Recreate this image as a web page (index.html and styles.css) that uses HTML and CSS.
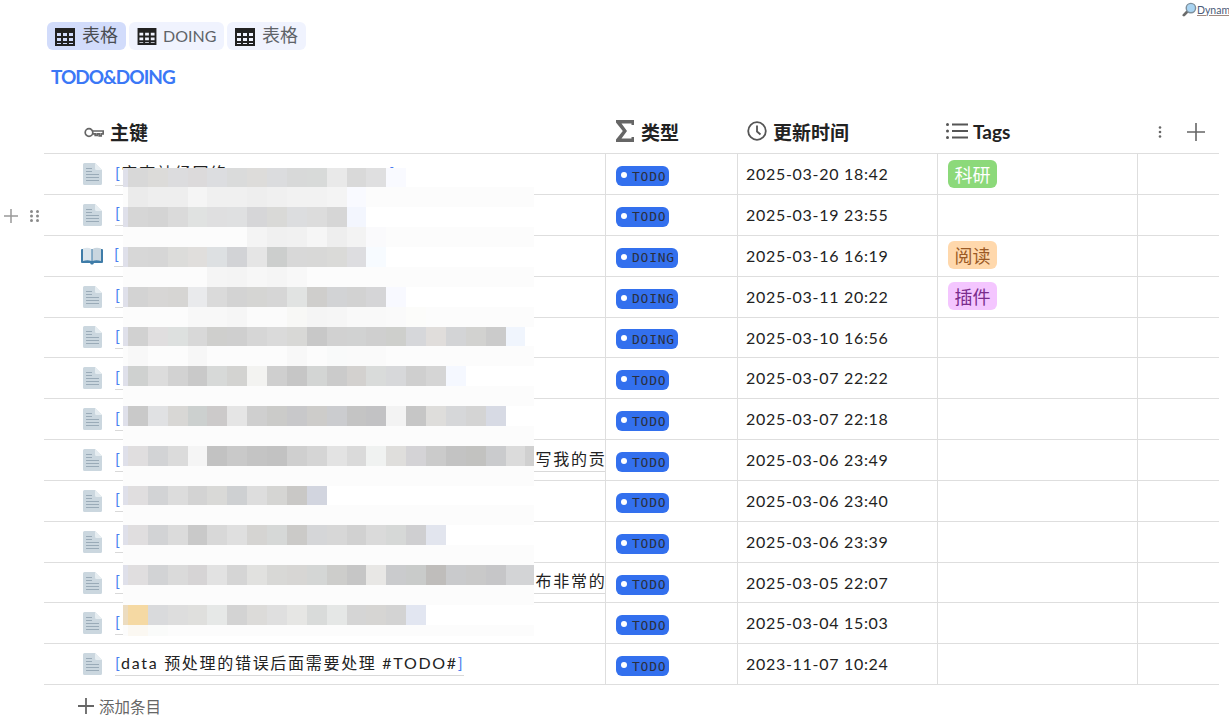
FILE: index.html
```html
<!DOCTYPE html>
<html lang="zh">
<head>
<meta charset="utf-8">
<title>TODO&amp;DOING</title>
<link rel="stylesheet" href="styles.css">
</head>
<body>
<svg width="0" height="0" class="defs">
  <defs>
    <symbol id="grid" viewBox="0 0 20 18"><path fill="#222" fill-rule="evenodd" d="M0 0h20v18H0zM2 5v3h4V5zm6 0v3h4V5zm6 0v3h4V5zM2 10v3h4v-3zm6 0v3h4v-3zm6 0v3h4v-3zM2 15v1h4v-1zm6 0v1h4v-1zm6 0v1h4v-1z"/></symbol>
    <symbol id="doc" viewBox="0 0 19 22"><path fill="#cbd7df" d="M1.5 0H12l7 7v13.500a1.500 1.500 0 0 1-1.500 1.500h-16A1.500 1.500 0 0 1 0 20.500V1.500A1.500 1.500 0 0 1 1.500 0z"/><path fill="#e6edf1" d="M12 0l7 7h-5.500A1.500 1.500 0 0 1 12 5.500z"/><path stroke="#9aabb8" stroke-width="1" fill="none" d="M3 5.500h6M3 8.500h6M3 11.500h13M3 14.500h13M3 17.500h13"/></symbol>
    <symbol id="book" viewBox="0 0 22 18"><path fill="#3f7ca8" d="M1 2h20a1 1 0 0 1 1 1v12a1 1 0 0 1-1 1h-8l-1 1.500h-2L9 16H1a1 1 0 0 1-1-1V3a1 1 0 0 1 1-1z"/><path fill="#dbe5ec" d="M2 1.500c3-1 6-1 8.500.5v12c-2.500-1-5.500-1-8.500 0z"/><path fill="#c9d6df" d="M20 1.500c-3-1-6-1-8.500.5v12c2.500-1 5.500-1 8.500 0z"/></symbol>
  </defs>
</svg>

<a class="dyn" href="#">
  <svg class="dyn-icon" viewBox="0 0 16 16"><path stroke="#6b6b6b" stroke-width="3" stroke-linecap="round" d="M2 14l3.500-3.500"/><circle cx="9.500" cy="6.500" r="5" fill="#a9d4f2" stroke="#7d8f9c" stroke-width="1.500"/></svg><span class="dyn-text">Dynamic</span>
</a>

<main class="page">
  <nav class="tabs">
    <div class="tab tab-active"><svg class="tab-icon"><use href="#grid"/></svg><span class="tab-label">表格</span></div>
    <div class="tab tab-narrow"><svg class="tab-icon tab-icon-small"><use href="#grid"/></svg><span class="tab-latin">DOING</span></div>
    <div class="tab"><svg class="tab-icon"><use href="#grid"/></svg><span class="tab-label">表格</span></div>
  </nav>
  <h1 class="title">TODO&amp;DOING</h1>

  <section class="table">
    <div class="handle">
      <svg class="handle-plus" viewBox="0 0 14 14"><path d="M7 0v14M0 7h14" stroke="#999" stroke-width="1.500"/></svg>
      <svg class="handle-drag" viewBox="0 0 9 12"><g fill="#8a8a8a"><circle cx="1.500" cy="1.500" r="1.500"/><circle cx="7.500" cy="1.500" r="1.500"/><circle cx="1.500" cy="6" r="1.500"/><circle cx="7.500" cy="6" r="1.500"/><circle cx="1.500" cy="10.500" r="1.500"/><circle cx="7.500" cy="10.500" r="1.500"/></g></svg>
    </div>

    <header class="row row-head">
      <div class="head head-name">
        <svg class="ico-key" viewBox="0 0 20 11"><g fill="none" stroke="#666" stroke-width="1.700"><circle cx="5" cy="5.500" r="3.800"/><path d="M8.800 4h10.400v2.800h-2v2h-2v-2h-2v1.500h-2v-1.500H8.800"/></g></svg>
        <span>主键</span>
      </div>
      <div class="head head-type">
        <svg class="ico-sigma" viewBox="0 0 18 22"><path fill="#666" d="M0 0h18v5h-2.500V3.500H5.500L11 11l-5.500 7.500h10V17H18v5H0v-2.500L6.800 11 0 2.500z"/></svg>
        <span>类型</span>
      </div>
      <div class="head head-time">
        <svg class="ico-clock" viewBox="0 0 20 20"><circle cx="10" cy="10" r="8.800" fill="none" stroke="#555" stroke-width="1.800"/><path d="M10 4.500V10.500l3.500 3" fill="none" stroke="#555" stroke-width="1.800"/></svg>
        <span>更新时间</span>
      </div>
      <div class="head head-tags">
        <svg class="ico-list" viewBox="0 0 22 18"><g fill="#555"><circle cx="1.500" cy="2.500" r="1.500"/><circle cx="1.500" cy="9" r="1.500"/><circle cx="1.500" cy="15.500" r="1.500"/><path d="M6 1.500h16v2H6zM6 8h16v2H6zM6 14.500h16v2H6z"/></g></svg>
        <span>Tags</span>
      </div>
      <div class="head head-more">
        <svg class="ico-dots" viewBox="0 0 4 12"><g fill="#666"><circle cx="2" cy="1.500" r="1.300"/><circle cx="2" cy="6" r="1.300"/><circle cx="2" cy="10.500" r="1.300"/></g></svg>
        <svg class="ico-plus" viewBox="0 0 18 18"><path d="M9 0v18M0 9h18" stroke="#666" stroke-width="1.600"/></svg>
      </div>
    </header>

    <div class="row"><div class="cell cell-name"><svg class="doc"><use href="#doc"/></svg><span class="ref"><b class="br">[</b>审查神经网络<span class="gap gap-a"></span><b class="br">]</b></span></div><div class="cell cell-type"><span class="pill">TODO</span></div><div class="cell cell-time">2025-03-20 18:42</div><div class="cell cell-tags"><span class="tag tag-green">科研</span></div><div class="cell"></div></div>
    <div class="row"><div class="cell cell-name"><svg class="doc"><use href="#doc"/></svg><span class="ref"><b class="br">[</b><span class="gap gap-b"></span></span></div><div class="cell cell-type"><span class="pill">TODO</span></div><div class="cell cell-time">2025-03-19 23:55</div><div class="cell cell-tags"></div><div class="cell"></div></div>
    <div class="row"><div class="cell cell-name"><svg class="book"><use href="#book"/></svg><span class="ref"><b class="br">[</b><span class="gap gap-b"></span></span></div><div class="cell cell-type"><span class="pill">DOING</span></div><div class="cell cell-time">2025-03-16 16:19</div><div class="cell cell-tags"><span class="tag tag-orange">阅读</span></div><div class="cell"></div></div>
    <div class="row"><div class="cell cell-name"><svg class="doc"><use href="#doc"/></svg><span class="ref"><b class="br">[</b><span class="gap gap-b"></span></span></div><div class="cell cell-type"><span class="pill">DOING</span></div><div class="cell cell-time">2025-03-11 20:22</div><div class="cell cell-tags"><span class="tag tag-purple">插件</span></div><div class="cell"></div></div>
    <div class="row"><div class="cell cell-name"><svg class="doc"><use href="#doc"/></svg><span class="ref"><b class="br">[</b><span class="gap gap-b"></span></span></div><div class="cell cell-type"><span class="pill">DOING</span></div><div class="cell cell-time">2025-03-10 16:56</div><div class="cell cell-tags"></div><div class="cell"></div></div>
    <div class="row"><div class="cell cell-name"><svg class="doc"><use href="#doc"/></svg><span class="ref"><b class="br">[</b><span class="gap gap-b"></span></span></div><div class="cell cell-type"><span class="pill">TODO</span></div><div class="cell cell-time">2025-03-07 22:22</div><div class="cell cell-tags"></div><div class="cell"></div></div>
    <div class="row"><div class="cell cell-name"><svg class="doc"><use href="#doc"/></svg><span class="ref"><b class="br">[</b><span class="gap gap-b"></span></span></div><div class="cell cell-type"><span class="pill">TODO</span></div><div class="cell cell-time">2025-03-07 22:18</div><div class="cell cell-tags"></div><div class="cell"></div></div>
    <div class="row"><div class="cell cell-name"><svg class="doc"><use href="#doc"/></svg><span class="ref ref-full"><b class="br">[</b><span class="gap gap-c"></span>写我的贡</span></div><div class="cell cell-type"><span class="pill">TODO</span></div><div class="cell cell-time">2025-03-06 23:49</div><div class="cell cell-tags"></div><div class="cell"></div></div>
    <div class="row"><div class="cell cell-name"><svg class="doc"><use href="#doc"/></svg><span class="ref"><b class="br">[</b><span class="gap gap-b"></span></span></div><div class="cell cell-type"><span class="pill">TODO</span></div><div class="cell cell-time">2025-03-06 23:40</div><div class="cell cell-tags"></div><div class="cell"></div></div>
    <div class="row"><div class="cell cell-name"><svg class="doc"><use href="#doc"/></svg><span class="ref"><b class="br">[</b><span class="gap gap-b"></span></span></div><div class="cell cell-type"><span class="pill">TODO</span></div><div class="cell cell-time">2025-03-06 23:39</div><div class="cell cell-tags"></div><div class="cell"></div></div>
    <div class="row"><div class="cell cell-name"><svg class="doc"><use href="#doc"/></svg><span class="ref ref-full"><b class="br">[</b><span class="gap gap-c"></span>布非常的</span></div><div class="cell cell-type"><span class="pill">TODO</span></div><div class="cell cell-time">2025-03-05 22:07</div><div class="cell cell-tags"></div><div class="cell"></div></div>
    <div class="row"><div class="cell cell-name"><svg class="doc"><use href="#doc"/></svg><span class="ref"><b class="br">[</b><span class="gap gap-b"></span></span></div><div class="cell cell-type"><span class="pill">TODO</span></div><div class="cell cell-time">2025-03-04 15:03</div><div class="cell cell-tags"></div><div class="cell"></div></div>
    <div class="row"><div class="cell cell-name"><svg class="doc"><use href="#doc"/></svg><span class="ref"><b class="br">[</b>data 预处理的错误后面需要处理 #TODO#<b class="br">]</b></span></div><div class="cell cell-type"><span class="pill">TODO</span></div><div class="cell cell-time">2023-11-07 10:24</div><div class="cell cell-tags"></div><div class="cell"></div></div>

    <footer class="add"><svg class="ico-add" viewBox="0 0 16 16"><path d="M8 0v16M0 8h16" stroke="#666" stroke-width="1.800"/></svg><span>添加条目</span></footer>

    <svg class="mosaic" viewBox="0 0 411 468" aria-hidden="true">
      <rect class="sheet" width="411" height="468"/>
      <g transform="translate(5 -.4) scale(19.87)">
        <rect class="band" y="1"/><rect class="band" y="3"/><rect class="band" y="5"/><rect class="band" y="7"/><rect class="band" y="9"/><rect class="band" y="11"/><rect class="band" y="13"/><rect class="band" y="15"/><rect class="band" y="17"/><rect class="band" y="19"/><rect class="band" y="21"/><rect class="band" y="23"/>
        <rect class="edge" y="0"/><rect class="edge" y="2"/><rect class="edge" y="4"/><rect class="edge" y="6"/><rect class="edge" y="8"/><rect class="edge" y="10"/><rect class="edge" y="12"/><rect class="edge" y="14"/><rect class="edge" y="16"/><rect class="edge" y="18"/><rect class="edge" y="20"/><rect class="edge edge-warm" y="22"/>
        <g><rect x="0" fill="#d8d8d8"/><rect x="1" fill="#dcdbd9"/><rect x="2" fill="#dcdcde"/><rect x="3" fill="#dcdadb"/><rect x="4" fill="#dcdde0"/><rect x="5" fill="#dadbdb"/><rect x="6" fill="#dddcda"/><rect x="7" fill="#dbdcde"/><rect x="8" fill="#d8d9d9"/><rect x="9" fill="#d8dad9"/><rect x="10" fill="#e9e9e9"/><rect x="11" fill="#d9d9d9"/><rect x="12" fill="#dfdfe0"/><rect x="13" fill="#f9faff"/></g>
        <g transform="translate(0 1)"><rect x="0" fill="#ebebeb"/><rect x="1" fill="#eeeeee"/><rect x="2" fill="#eeeeee"/><rect x="3" fill="#f5f5f5"/><rect x="4" fill="#f0f0f0"/><rect x="5" fill="#f0f0f0"/><rect x="6" fill="#eeeeee"/><rect x="7" fill="#f0f0f0"/><rect x="8" fill="#f2f2f2"/><rect x="9" fill="#f2f2f2"/><rect x="10" fill="#f4f4f4"/><rect x="11" fill="#f9faff"/></g>
        <g transform="translate(0 2)"><rect x="0" fill="#d6d6d6"/><rect x="1" fill="#d4d4d4"/><rect x="2" fill="#dadada"/><rect x="3" fill="#e0e2e1"/><rect x="4" fill="#dfdfe0"/><rect x="5" fill="#dfe0e1"/><rect x="6" fill="#d6d6d8"/><rect x="7" fill="#d9d9d7"/><rect x="8" fill="#dcdddf"/><rect x="9" fill="#dcdcdc"/><rect x="10" fill="#d6d6d6"/><rect x="11" fill="#f3f6fe"/></g>
        <g transform="translate(0 3)"><rect x="6" fill="#f4f4f4"/><rect x="7" fill="#f0f0f0"/><rect x="8" fill="#f1f1f1"/><rect x="9" fill="#f6f6f6"/><rect x="10" fill="#eeeeee"/><rect x="11" fill="#f3f3f3"/><rect x="12" fill="#fafafc"/></g>
        <g transform="translate(0 4)"><rect x="0" fill="#d7d7d7"/><rect x="1" fill="#d6d6d6"/><rect x="2" fill="#dcdcda"/><rect x="3" fill="#e0dedc"/><rect x="4" fill="#dde0e2"/><rect x="5" fill="#d2d3d6"/><rect x="6" fill="#e5e5e5"/><rect x="7" fill="#cccecd"/><rect x="8" fill="#d8d8d8"/><rect x="9" fill="#d8d8d7"/><rect x="10" fill="#dadad8"/><rect x="11" fill="#dddde0"/><rect x="12" fill="#f7fbff"/></g>
        <g transform="translate(0 5)"><rect x="4" fill="#f5f5f5"/><rect x="5" fill="#f4f4f4"/><rect x="6" fill="#f7f7f7"/><rect x="7" fill="#f5f5f5"/><rect x="8" fill="#f8f8f8"/></g>
        <g transform="translate(0 6)"><rect x="0" fill="#d3d3d3"/><rect x="1" fill="#d7d6d5"/><rect x="2" fill="#d6d5d3"/><rect x="3" fill="#e9eaec"/><rect x="4" fill="#dadada"/><rect x="5" fill="#d3d3d3"/><rect x="6" fill="#d5d5d3"/><rect x="7" fill="#d6d6d6"/><rect x="8" fill="#e1e3e2"/><rect x="9" fill="#cfcecc"/><rect x="10" fill="#d2d3d5"/><rect x="11" fill="#d2d2d2"/><rect x="12" fill="#d5d5d7"/><rect x="13" fill="#f8f9ff"/></g>
        <g transform="translate(0 7)"><rect x="3" fill="#f8f8f8"/><rect x="4" fill="#f8f8f8"/><rect x="5" fill="#f6f6f6"/><rect x="6" fill="#fbfbfb"/><rect x="7" fill="#fbfbfb"/><rect x="8" fill="#f8f8f6"/><rect x="9" fill="#f5f5f5"/><rect x="10" fill="#f6f6f6"/><rect x="11" fill="#f9f9f9"/><rect x="12" fill="#f9f9f9"/><rect x="13" fill="#fafafa"/><rect x="14" fill="#fcfcfa"/></g>
        <g transform="translate(0 8)"><rect x="0" fill="#d1d1d1"/><rect x="1" fill="#e0dedf"/><rect x="2" fill="#dde0df"/><rect x="3" fill="#d8d8d8"/><rect x="4" fill="#cfcfcd"/><rect x="5" fill="#cfcfcf"/><rect x="6" fill="#d6d6d6"/><rect x="7" fill="#dadada"/><rect x="8" fill="#d8d8d6"/><rect x="9" fill="#c8c8c8"/><rect x="10" fill="#d1d1d1"/><rect x="11" fill="#d1d2d2"/><rect x="12" fill="#cfcfcf"/><rect x="13" fill="#cecfcc"/><rect x="14" fill="#d6d7da"/><rect x="15" fill="#e0dddb"/><rect x="16" fill="#d3d4d6"/><rect x="17" fill="#d2d2d0"/><rect x="18" fill="#cbcbcb"/><rect x="19" fill="#f0f5fd"/></g>
        <g transform="translate(0 9)"><rect x="0" fill="#f8f8f8"/><rect x="3" fill="#f7f7f7"/><rect x="8" fill="#f8f8f8"/><rect x="10" fill="#f9fafa"/><rect x="11" fill="#fafafa"/><rect x="12" fill="#fafafa"/></g>
        <g transform="translate(0 10)"><rect x="0" fill="#cfd1d0"/><rect x="1" fill="#dcdcdc"/><rect x="2" fill="#d2d2d2"/><rect x="3" fill="#c9c9c9"/><rect x="4" fill="#d7d9d8"/><rect x="5" fill="#d3d3d1"/><rect x="6" fill="#f3f3f1"/><rect x="7" fill="#cfcfcf"/><rect x="8" fill="#c6c6c6"/><rect x="9" fill="#d3d5d4"/><rect x="10" fill="#cbcbcb"/><rect x="11" fill="#d3d1cf"/><rect x="12" fill="#d9dbda"/><rect x="13" fill="#d7d8da"/><rect x="14" fill="#cfcfcf"/><rect x="15" fill="#d5d5d5"/><rect x="16" fill="#f5f8ff"/></g>
        <g transform="translate(0 12)"><rect x="0" fill="#c9c9c9"/><rect x="1" fill="#e0e1e3"/><rect x="2" fill="#d8d7d5"/><rect x="3" fill="#ccd0cf"/><rect x="4" fill="#cccaca"/><rect x="5" fill="#e5e5e5"/><rect x="6" fill="#cfcfcf"/><rect x="7" fill="#cbcbc9"/><rect x="8" fill="#c8c8ca"/><rect x="9" fill="#cdccca"/><rect x="10" fill="#cbcccf"/><rect x="11" fill="#c4c4c4"/><rect x="12" fill="#c2c2c4"/><rect x="13" fill="#f3f3f3"/><rect x="14" fill="#c6c6c6"/><rect x="15" fill="#dedddb"/><rect x="16" fill="#d6d7d9"/><rect x="17" fill="#d4d4d4"/><rect x="18" fill="#d7dae4"/></g>
        <g transform="translate(0 14)"><rect x="0" fill="#e0dedf"/><rect x="1" fill="#d2d3d5"/><rect x="2" fill="#dbdbdb"/><rect x="3" fill="#f5f5f5"/><rect x="4" fill="#c2c2c2"/><rect x="5" fill="#c9c9c9"/><rect x="6" fill="#c4c4c4"/><rect x="7" fill="#c2c2c2"/><rect x="8" fill="#cfcfcf"/><rect x="9" fill="#d5d5d5"/><rect x="10" fill="#e3e3e3"/><rect x="11" fill="#dadada"/><rect x="12" fill="#f0f2f1"/><rect x="13" fill="#dfdedc"/><rect x="14" fill="#d4d3d6"/><rect x="15" fill="#cbcbcb"/><rect x="16" fill="#c3c3c3"/><rect x="17" fill="#c2c2c0"/><rect x="18" fill="#cacbcd"/><rect x="19" fill="#dbdbdb"/><rect x="20" fill="#d0d0d0"/></g>
        <g transform="translate(0 16)"><rect x="0" fill="#e0dedf"/><rect x="1" fill="#d2d3d5"/><rect x="2" fill="#dcdcdc"/><rect x="3" fill="#d3d3d3"/><rect x="4" fill="#d9d9d7"/><rect x="5" fill="#ced0d2"/><rect x="6" fill="#dddddd"/><rect x="7" fill="#d5d5d3"/><rect x="8" fill="#c9c8c6"/><rect x="9" fill="#d2d5df"/></g>
        <g transform="translate(0 18)"><rect x="0" fill="#e0dedf"/><rect x="1" fill="#d2d3d5"/><rect x="2" fill="#dbdbdb"/><rect x="3" fill="#c9c9c9"/><rect x="4" fill="#d8d8d8"/><rect x="5" fill="#dfdfdf"/><rect x="6" fill="#d5d4d2"/><rect x="7" fill="#d6d8d7"/><rect x="8" fill="#cbcac8"/><rect x="9" fill="#d5d6d8"/><rect x="10" fill="#d7d7d7"/><rect x="11" fill="#d1d1d1"/><rect x="12" fill="#dadada"/><rect x="13" fill="#d6d8d7"/><rect x="14" fill="#cfcfd1"/><rect x="15" fill="#e2e5ee"/></g>
        <g transform="translate(0 20)"><rect x="0" fill="#e0dedf"/><rect x="1" fill="#d2d3d5"/><rect x="2" fill="#dadada"/><rect x="3" fill="#d6d4d5"/><rect x="4" fill="#e2e2e2"/><rect x="5" fill="#d5d5d5"/><rect x="6" fill="#e1e1df"/><rect x="7" fill="#d8d8d6"/><rect x="8" fill="#d7d6d4"/><rect x="9" fill="#d4d6d5"/><rect x="10" fill="#cdcdcb"/><rect x="11" fill="#c6c6c6"/><rect x="12" fill="#e8e7e5"/><rect x="13" fill="#cacbcd"/><rect x="14" fill="#c9cbca"/><rect x="15" fill="#bfbdbb"/><rect x="16" fill="#c9cacc"/><rect x="17" fill="#c9c9c9"/><rect x="18" fill="#c6c6c8"/><rect x="19" fill="#d3d4d6"/><rect x="20" fill="#d3d4d6"/></g>
        <g transform="translate(0 22)"><rect x="0" fill="#f5d9a3"/><rect x="1" fill="#d9dadc"/><rect x="2" fill="#dddddd"/><rect x="3" fill="#dfdfdd"/><rect x="4" fill="#e6e8e7"/><rect x="5" fill="#d3d3d3"/><rect x="6" fill="#dcdbd9"/><rect x="7" fill="#dfdfdf"/><rect x="8" fill="#e6e6e4"/><rect x="9" fill="#d9dbda"/><rect x="10" fill="#e5e7e6"/><rect x="11" fill="#d5d5d5"/><rect x="12" fill="#d6d5d3"/><rect x="13" fill="#d3d3d3"/><rect x="14" fill="#e2e6f1"/></g>
        <g transform="translate(0 23)"><rect x="0" fill="#fbf8f2"/><rect x="1" fill="#fafbfa"/></g>
      </g>
    </svg>
  </section>
</main>
</body>
</html>
```

FILE: styles.css
```css
* { box-sizing: border-box; }
html, body { margin: 0; height: 100%; overflow: hidden; background: #fff; }
body {
  font-family: "Lato", "Noto Sans CJK SC", sans-serif;
  color: #222;
  font-size: 16px;
}
.defs { position: absolute; }

.dyn {
  position: absolute;
  left: 1182px;
  top: 2px;
  width: 47px;
  display: flex;
  align-items: center;
  overflow: hidden;
  color: #4a5a78;
  font-size: 10.5px;
  white-space: nowrap;
}
.dyn-icon { width: 15px; height: 15px; flex: none; }
.dyn-text { text-decoration: underline; text-decoration-color: #a08a80; }

.page { padding: 22px 10px 0 44px; }

.tabs { display: flex; gap: 3px; margin-left: 3px; height: 28px; }
.tab {
  display: flex;
  align-items: center;
  gap: 7px;
  width: 79px;
  padding: 0 8px;
  border-radius: 6px;
  background: #f0f3fe;
  color: #5f6368;
  font-size: 18px;
}
.tab-narrow { width: 95px; gap: 6px; }
.tab-active { background: #d2dcfb; color: #4a4d52; }
.tab-label { position: relative; top: -2px; }
.tab-latin { position: relative; top: -1px; font-size: 16px; }
.tab-icon { width: 20px; height: 18px; margin-top: 1px; flex: none; }
.tab-icon-small { width: 20px; height: 17px; }

.title {
  margin: 15px 0 0 7px;
  font-size: 19px;
  line-height: 24px;
  letter-spacing: -1px;
  font-weight: 700;
  color: #3b78f6;
}

.table { position: relative; margin-top: 22px; }

.handle {
  position: absolute;
  left: -40px;
  top: 98px;
  display: flex;
  align-items: center;
  gap: 12px;
}
.handle-plus { width: 14px; height: 14px; }
.handle-drag { width: 9px; height: 12px; }

.row {
  display: grid;
  grid-template-columns: 562px 132px 200px 200px 81px;
  height: 40.850px;
  border-bottom: 1px solid #dedede;
}
.row-head { height: 43.200px; padding-bottom: 2px; }

.head {
  display: flex;
  align-items: center;
  font-weight: 700;
  font-size: 19px;
  color: #222;
}
.head-name { padding-left: 40px; gap: 6px; }
.head-type { padding-left: 10px; gap: 7px; }
.head-time { padding-left: 9px; gap: 6px; }
.head-tags { padding-left: 8px; gap: 5px; }
.head-more { padding: 2px 0 0 20px; gap: 25px; }

.ico-key { width: 20px; height: 11px; margin-top: 2px; }
.ico-sigma { width: 18px; height: 22px; }
.ico-clock { width: 20px; height: 20px; }
.ico-list { width: 22px; height: 18px; }
.ico-dots { width: 4px; height: 12px; }
.ico-plus { width: 18px; height: 18px; }

.cell {
  display: flex;
  align-items: center;
  min-width: 0;
  border-right: 1px solid #dedede;
}
.row > .cell:last-child { border-right: 0; }

.cell-name { padding-left: 39px; overflow: hidden; }
.doc { width: 19px; height: 22px; flex: none; margin-right: 12px; }
.book { width: 22px; height: 18px; flex: none; margin: 0 10px 0 -2px; }

.ref {
  display: block;
  flex: none;
  height: 23px;
  margin-left: 1px;
  line-height: 20px;
  letter-spacing: 1.700px;
  white-space: nowrap;
  border-bottom: 1px solid #d9d9d9;
}
.ref-full { width: 492px; }
.br { font-weight: 400; color: #4a7ff0; }
.gap { display: inline-block; height: 1px; }
.gap-a { width: 162px; }
.gap-b { width: 200px; }
.gap-c { width: 414px; }

.cell-type { padding-left: 10px; }
.pill {
  display: inline-flex;
  align-items: center;
  height: 20px;
  margin-top: 4px;
  padding: 0 3px 0 16px;
  border-radius: 6px;
  background: #3370ee;
  color: #2a2f3d;
  font-family: "DejaVu Sans Mono", monospace;
  font-size: 13px;
  letter-spacing: .75px;
  position: relative;
}
.pill::before {
  content: "";
  position: absolute;
  left: 4.500px;
  top: 6px;
  width: 6px;
  height: 6px;
  border-radius: 50%;
  background: #fff;
}

.cell-time { padding: 0 0 .8px 8px; letter-spacing: .7px; }

.cell-tags { padding-left: 10px; }
.tag {
  display: inline-flex;
  align-items: center;
  justify-content: center;
  width: 49px;
  height: 28px;
  margin-top: -1px;
  border-radius: 6px;
  font-size: 18px;
}
.tag-green { background: #8cd97a; color: #fff; }
.tag-orange { background: #ffd8ac; color: #9b5a25; }
.tag-purple { background: #f4c6ff; color: #7a2c8c; }

.add {
  display: flex;
  align-items: center;
  gap: 5px;
  height: 44px;
  padding: 0 0 2px 34px;
  font-size: 15.500px;
  color: #666;
}
.ico-add { width: 16px; height: 16px; }

.mosaic {
  position: absolute;
  left: 79px;
  top: 57px;
  width: 411px;
  height: 468px;
  shape-rendering: crispEdges;
}
.mosaic rect { width: 1px; height: 1px; }
.mosaic .sheet { width: 411px; height: 468px; fill: #fff; }
.mosaic .band { x: -.25px; width: 20.700px; fill: #fcfcfc; }
.mosaic .edge { x: -.25px; width: .25px; fill: #dfe0ea; }
.mosaic .edge-warm { fill: #ecdcc0; }
```
